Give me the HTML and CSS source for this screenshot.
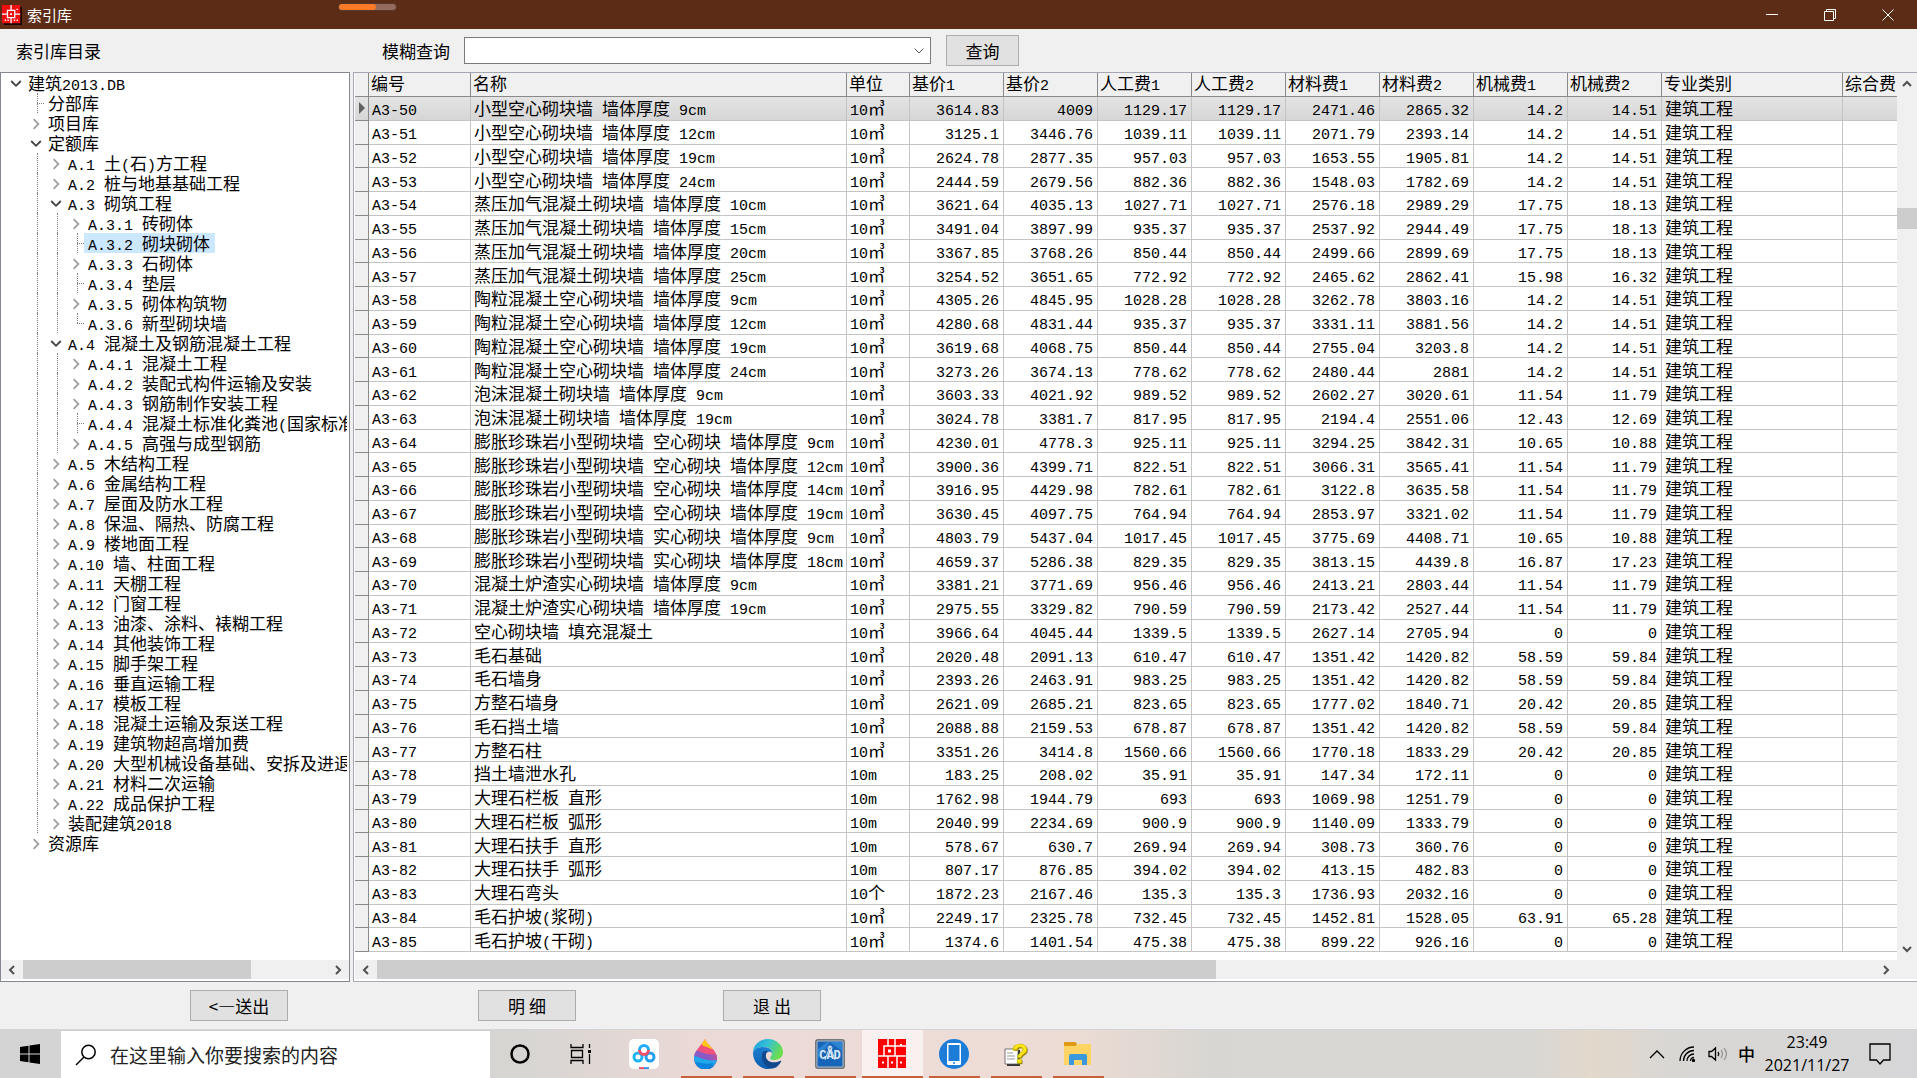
FILE: index.html
```html
<!DOCTYPE html>
<html lang="zh-CN">
<head>
<meta charset="utf-8">
<title>索引库</title>
<link rel="stylesheet" href="styles.css">
</head>
<body>
<header class="titlebar">
  <svg class="app-icon" viewBox="0 0 22 22"><path d="M2 2h20v20H2z" fill="#1a0500"/><path d="M0 0h20v20H0z" fill="#f01010"/><path d="M6 6h8v8H6zM10 0v6M10 14v6M0 10h6M14 10h6" fill="none" stroke="#fff" stroke-width="1.4"/><path d="M9 9h2v2H9zM3 16h1.500v1.500H3zM6 16h1.500v1.500H6zM13 16h1.500v1.500H13zM16 16h1.500v1.500H16zM16 4h1.500v1.500H16z" fill="#fff"/></svg>
  <h1 class="title">索引库</h1>
  <div class="pill"><span class="pill-fill"></span></div>
  <div class="window-buttons">
    <button class="win-btn" aria-label="最小化"><svg viewBox="0 0 12 12"><path d="M0 5.500h12"/></svg></button>
    <button class="win-btn" aria-label="还原"><svg viewBox="0 0 12 12"><path d="M.5 2.500h9v9h-9zM2.500 2.500v-2h9v9h-2"/></svg></button>
    <button class="win-btn" aria-label="关闭"><svg viewBox="0 0 12 12"><path d="M.5.5l11 11M11.500.5l-11 11"/></svg></button>
  </div>
</header>

<section class="toolbar">
  <span class="toolbar-title">索引库目录</span>
  <div class="query">
    <label for="query">模糊查询</label>
    <div class="combo">
      <input id="query" type="text">
      <button class="combo-arrow" aria-label="展开"><svg viewBox="0 0 10 6"><path d="M.5.5L5 5 9.500.5"/></svg></button>
    </div>
    <button class="btn btn-query">查询</button>
  </div>
</section>

<main class="panes">
  <section class="pane tree-pane">
    <ul class="tree" id="tree"></ul>
    <div class="hscroll">
      <span class="arrow"><svg viewBox="0 0 8 10"><path d="M6 1L2 5l4 4"/></svg></span>
      <div class="track"><span class="thumb tree-thumb"></span></div>
      <span class="arrow"><svg viewBox="0 0 8 10"><path d="M2 1l4 4-4 4"/></svg></span>
    </div>
  </section>
  <section class="pane grid-pane">
    <div class="grid-area">
      <div class="grid-box">
        <table class="grid">
          <colgroup><col class="c-mark"><col class="c-code"><col class="c-name"><col class="c-unit"><col class="c-num"><col class="c-num"><col class="c-num"><col class="c-num"><col class="c-num"><col class="c-num"><col class="c-num"><col class="c-num"><col class="c-kind"><col></colgroup>
          <thead><tr id="head"></tr></thead>
          <tbody id="rows"></tbody>
        </table>
      </div>
      <div class="vscroll">
        <span class="arrow"><svg viewBox="0 0 10 8"><path d="M1 6l4-4 4 4"/></svg></span>
        <div class="vtrack"><span class="vthumb"></span></div>
        <span class="arrow"><svg viewBox="0 0 10 8"><path d="M1 2l4 4 4-4"/></svg></span>
      </div>
    </div>
    <div class="hscroll grid-hscroll">
      <span class="arrow"><svg viewBox="0 0 8 10"><path d="M6 1L2 5l4 4"/></svg></span>
      <div class="track"><span class="thumb grid-thumb"></span></div>
      <span class="arrow"><svg viewBox="0 0 8 10"><path d="M2 1l4 4-4 4"/></svg></span>
    </div>
  </section>
</main>

<section class="actions">
  <button class="btn btn-send">&lt;—送出</button>
  <button class="btn btn-detail">明 细</button>
  <button class="btn btn-exit">退 出</button>
</section>

<footer class="taskbar">
  <button class="start" aria-label="开始"><svg viewBox="0 0 20 20"><path d="M0 3l8.500-1.200v7.700H0zM9.500 1.600L20 0v9.500H9.500zM0 10.500h8.500v7.700L0 17zM9.500 10.500H20V20L9.500 18.400z"/></svg></button>
  <label class="search">
    <svg viewBox="0 0 22 22"><circle cx="13.500" cy="8" r="6.700"/><path d="M9 13l-8 8"/></svg>
    <input type="text" placeholder="在这里输入你要搜索的内容" aria-label="搜索">
  </label>
  <nav class="apps">
    <button class="app" aria-label="Cortana"><svg viewBox="0 0 30 30"><circle cx="15" cy="15" r="8.500" fill="none" stroke="#000" stroke-width="2.500"/></svg></button>
    <button class="app" aria-label="任务视图"><svg viewBox="0 0 30 30"><path d="M4 5v3.500h12V5M4 25v-3.500h12V25M4.500 11.500h11v7h-11zM22.500 5v4M22.500 15v10" fill="none" stroke="#000" stroke-width="1.300"/><path d="M21 11h3v3h-3z"/></svg></button>
    <button class="app" aria-label="网盘"><svg viewBox="0 0 30 30"><rect width="30" height="30" rx="5" fill="#fff"/><g fill="none" stroke-width="3"><circle cx="9" cy="18" r="4" stroke="#20b4f4"/><circle cx="21" cy="18" r="4" stroke="#20a0f0"/><path d="M10.500 11a4.500 4.500 0 0 1 9 0" stroke="#22aef5"/><path d="M10.500 11a4.500 4.500 0 0 0 9 0" stroke="#f25068"/></g><path d="M10 28.200h5V30h-5z" fill="#f04860"/><path d="M15 28.200h5V30h-5z" fill="#2b8cf0"/></svg></button>
    <button class="app open" aria-label="画图 3D"><svg viewBox="0 0 30 30"><defs><clipPath id="drop"><path d="M14 0c1 5 12 11 12 19a11 11 0 0 1-23 0C3 12 10 7 14 0z"/></clipPath><linearGradient id="dg" x1="0" y1="0" x2="1" y2="0"><stop offset="0" stop-color="#8a5cc8"/><stop offset=".6" stop-color="#8a58c4"/><stop offset="1" stop-color="#d84c90"/></linearGradient></defs><g clip-path="url(#drop)"><path d="M0 0h30v30H0z" fill="#f0507c"/><path d="M8 0h14v10c-4 0-6-3-10-3z" fill="#ffc810"/><path d="M0 11c10-1 14 8 30 3v16H0z" fill="url(#dg)"/><path d="M0 17c8-1 12 6 26 4v9H0z" fill="#20a8ec"/><path d="M2 23c8 0 12 3 20 1v6H4z" fill="#0b84dc"/></g></svg></button>
    <button class="app open" aria-label="Edge"><svg viewBox="0 0 30 30"><defs><linearGradient id="eg" x1="0" y1="0" x2="1" y2=".4"><stop offset="0" stop-color="#1a98dc"/><stop offset=".5" stop-color="#35c1d4"/><stop offset="1" stop-color="#6add50"/></linearGradient><linearGradient id="eb" x1="0" y1="0" x2="0" y2="1"><stop offset="0" stop-color="#1a7ed0"/><stop offset="1" stop-color="#0d5cae"/></linearGradient></defs><path d="M0 14C0 6 7 0 15 0s15 6 15 13c0 6-5 8-9 8-3 0-4-1-4-2s2-2 2-5c0-4-4-6-8-6-6 0-10 3-11 6z" fill="url(#eg)"/><path d="M0 14c1-4 6-6 10-6 6 0 9 3 9 6-1-1-2-1.500-4-1-4 1-5 7-2 11 3 5 8 5 13 3-3 2-7 3-11 3C7 30 0 23 0 14z" fill="url(#eb)"/><path d="M10 13c-3 5 0 16 9 16 4 0 7-3 9-6 .5-1 0-1.500-1-1-6 3-15 1-14-6 0-2 1-3 2-3.500-2-1-4-.5-5 .5z" fill="#12488c"/></svg></button>
    <button class="app open" aria-label="CAD"><svg viewBox="0 0 30 30"><rect width="30" height="30" rx="3" fill="#74777c"/><rect x="1.500" y="1.500" width="27" height="27" rx="2" fill="#a9bccb"/><rect x="2.500" y="2.500" width="25" height="25" rx="1" fill="#1765b8"/><path d="M3 10L12 3h15v9L15 3 3 20z" fill="#2e82d2"/><path d="M15 7l-5 14M15 7l5 14" stroke="#c8d8e8" stroke-width="1"/><circle cx="15" cy="9" r="2" fill="none" stroke="#dce8f4"/><text x="15" y="20" class="cad-text">CAD</text></svg></button>
    <button class="app open current" aria-label="索引库"><svg viewBox="0 0 30 30"><path d="M1 0h28v29H1z" fill="#f00"/><path d="M7 7h11v10H7zM11 0v7M18 7h11M1 17h10M11 17v12M18 17h11M18 0v7M20 17v12" fill="none" stroke="#fff" stroke-width="1.500"/><path d="M11 10.500h3v3h-3zM5 22.500h2v2H5zM14 22.500h2v2h-2zM23 22.500h2v2h-2zM23 5h2v2h-2z" fill="#fff"/></svg></button>
    <button class="app open" aria-label="手机"><svg viewBox="0 0 30 30"><circle cx="15" cy="15" r="15" fill="#1c7cd8"/><rect x="8" y="4" width="14" height="22" rx="1.500" fill="#fff"/><path d="M9.500 6h11v16h-11z" fill="#1c7cd8"/><circle cx="15" cy="24" r="1" fill="#1c7cd8"/></svg></button>
    <button class="app open" aria-label="帮助"><svg viewBox="0 0 30 30"><path d="M6 11h13v16H6z" fill="#333"/><path d="M4 10h13v15H4z" fill="#fff" stroke="#555" stroke-width=".8"/><path d="M6 14h6M6 17h8M6 20h8" stroke="#999"/><text x="20" y="25" class="help-shadow">?</text><text x="19" y="24" class="help-text">?</text></svg></button>
    <button class="app open" aria-label="文件资源管理器"><svg viewBox="0 0 30 30"><path d="M1 4q0-1 1-1h10q1 0 2 2l-1 2H1z" fill="#dd9a12"/><path d="M1 7h12l2-2h13v20q0 1-1 1H2q-1 0-1-1z" fill="#ffd364"/><path d="M6 26V17q0-2 2-2h14q2 0 2 2v9h-5v-5h-8v5z" fill="#3a98dc"/></svg></button>
  </nav>
  <div class="tray">
    <svg class="up" viewBox="0 0 16 10"><path d="M1 9l7-7 7 7"/></svg>
    <svg class="wifi" viewBox="0 0 17 16"><path d="M1 15A14 14 0 0 1 15 1M4.500 15A10.500 10.500 0 0 1 15 4.500M8 15a7 7 0 0 1 7-7M11.500 15a3.500 3.500 0 0 1 3.500-3.500"/><circle cx="14.500" cy="14.500" r="1" fill="#000"/></svg>
    <svg class="volume" viewBox="0 0 20 16"><path d="M1 5.500h2.500L7.500 2v12l-4-3.500H1zM10 6q1.500 2 0 4"/><path class="faint" d="M13 4q3 4 0 8M16 2q5 6 0 12"/></svg>
    <span class="ime">中</span>
    <time class="clock" datetime="2021-11-27T23:49"><span>23:49</span><span>2021/11/27</span></time>
    <svg class="note" viewBox="0 0 22 22"><path d="M1 1h20v16h-6.500L11 21l-3.500-4H1z"/></svg>
  </div>
</footer>
<script src="app.js"></script>
</body>
</html>
```
FILE: styles.css
```css
* { box-sizing: border-box; }
html, body { height: 100%; margin: 0; }
body {
  display: flex;
  flex-direction: column;
  min-height: 0;
  overflow: hidden;
  background: #f0f0f0;
  color: #000;
  font: 17px/20px "Noto Sans CJK SC", sans-serif;
}
button, input { font: inherit; color: inherit; }
button { padding: 0; border: 0; background: none; }
.lat { font-family: "Liberation Mono", monospace; font-size: 15px; line-height: 0; white-space: pre; }

/* Title bar */
.titlebar {
  position: relative;
  display: flex;
  align-items: center;
  flex: none;
  height: 29px;
  padding-left: 2px;
  background: #5c2c17;
  color: #fff;
}
.app-icon { width: 20px; height: 20px; }
.title { margin: 0 0 0 5px; font-size: 15px; font-weight: 400; }
.pill {
  position: absolute;
  left: 338px;
  top: 3px;
  width: 59px;
  height: 8px;
  border: 1px solid #54382c;
  border-radius: 4px;
  background: #946b5c;
}
.pill-fill { display: block; width: 37px; height: 6px; border-radius: 3px; background: #fa7a28; }
.window-buttons { display: flex; margin-left: auto; }
.win-btn { display: grid; place-items: center; width: 58px; height: 29px; }
.win-btn svg { width: 12px; height: 12px; fill: none; stroke: #fff; }

/* Query bar */
.toolbar { display: flex; flex: none; align-items: center; height: 43px; padding: 0 16px; }
.toolbar-title { width: 366px; }
.query { display: flex; align-items: center; }
.query label { width: 82px; }
.combo { display: flex; width: 467px; height: 27px; border: 1px solid #7a7a7a; background: #fff; }
.combo input { flex: 1; min-width: 0; border: 0; outline: 0; padding: 0 4px; background: none; }
.combo-arrow { display: grid; place-items: center; width: 22px; }
.combo-arrow svg { width: 10px; height: 6px; fill: none; stroke: #555; }
.btn { height: 31px; border: 1px solid #adadad; background: #e1e1e1; line-height: 20px; }
.btn-query { width: 73px; margin-left: 15px; }

/* Panes */
.panes { display: flex; flex: 1; min-height: 0; gap: 3px; }
.pane { display: flex; flex-direction: column; min-width: 0; border: 1px solid #828790; background: #fff; }
.tree-pane { flex: none; width: 350px; }
.grid-pane { flex: 1; border-color: #a5a8b2; border-right: 0; padding-left: 1px; }

/* Tree */
.tree { flex: 1; min-height: 0; margin: 0 2px 0 3px; padding: 0; list-style: none; overflow: hidden; }
.tree li { display: flex; height: 20px; line-height: 20px; white-space: nowrap; }
.cell { position: relative; flex: none; width: 20px; height: 20px; }
.cell svg { display: block; width: 12px; height: 12px; margin: 5px 0 0 6px; fill: none; stroke: #a0a0a0; stroke-width: 1.500; }
.cell.opened svg { stroke: #404040; }
.cell.line::before { content: ""; position: absolute; left: 13px; top: 0; height: 100%; border-left: 1px dotted #808080; }
.cell.end::before { height: 10px; }
.cell.leaf::after { content: ""; position: absolute; left: 13px; top: 10px; width: 7px; border-top: 1px dotted #808080; }
.label { padding: 0 5px 0 4px; }
.label.selected { background: #cce8ff; }

/* Scroll bars */
.hscroll { display: flex; flex: none; height: 21px; background: #f0f0f0; border-bottom: 2px solid #fff; }
.arrow { display: grid; place-items: center; flex: none; width: 22px; height: 19px; }
.arrow svg { width: 10px; height: 10px; fill: none; stroke: #505050; stroke-width: 2; }
.track { flex: 1; display: flex; }
.thumb, .vthumb { background: #cdcdcd; }
.tree-thumb { width: 75%; }
.grid-hscroll .arrow:last-child { width: 42px; padding-right: 20px; }
.grid-thumb { width: 56%; }
.grid-area { display: flex; flex: 1; min-height: 0; }
.grid-box { flex: 1; min-width: 0; padding-bottom: 8px; }
.vscroll { display: flex; flex-direction: column; flex: none; width: 20px; background: #f0f0f0; }
.vscroll .arrow { width: 20px; height: 22px; }
.vtrack { display: flex; flex-direction: column; flex: 1; padding-top: 113px; }
.vthumb { height: 21px; }

/* Data grid */
.grid { width: 100%; height: 100%; border-collapse: separate; border-spacing: 0; table-layout: fixed; }
.c-mark { width: 14px; }
.c-code { width: 102px; }
.c-name { width: 376px; }
.c-unit { width: 63px; }
.c-num { width: 94px; }
.c-kind { width: 181px; }
.grid th, .grid td { padding: 0 4px 0 3px; text-align: left; font-weight: 400; white-space: nowrap; overflow: hidden; line-height: 20px; }
.grid th { height: 24px; padding: 0 0 3px 2px; border-right: 1px solid #8a8a8a; border-bottom: 1px solid #8a8a8a; background: #f0f0f0; }
.grid td { border-right: 1px solid #c4c4c4; border-bottom: 1px solid #c4c4c4; }
.grid td.name { padding-right: 0; }
.grid td.num { text-align: right; }
.grid td.mark { padding: 0; background: #f0f0f0; border-color: #8a8a8a; }
.grid th:last-child, .grid td:last-child { border-right: 0; }
.grid .active td { background: linear-gradient(#e4e4e4, #d6d6d6); }
.mark svg { display: block; width: 6px; height: 12px; margin-left: 4px; fill: #606060; }

/* Bottom buttons */
.actions { display: flex; flex: none; height: 48px; padding: 8px 190px; border-bottom: 1px solid #d4d4d8; }
.actions .btn { width: 98px; }
.btn-detail { margin-left: 190px; }
.btn-exit { margin-left: 147px; }

/* Task bar */
.taskbar {
  display: flex;
  flex: none;
  height: 48px;
  background: linear-gradient(90deg, #d4d4d4 0, #d6d5d2 27%, #ead9d5 36%, #eedcd7 52%, #ecdcd4 56%, #d8d6d2 63%, #d9d7d3 80%, #e2d8cb 83%, #d9d7d4 87%, #d6d6d8 100%);
}
.start { display: grid; place-items: center; width: 61px; padding-right: 1px; }
.start svg { width: 20px; height: 20px; }
.search { display: flex; align-items: center; width: 429px; padding-left: 14px; background: #fff; border-top: 1px solid #d0d0d0; }
.search svg { width: 22px; height: 22px; fill: none; stroke: #000; stroke-width: 1.500; }
.search input { flex: 1; min-width: 0; margin-left: 13px; padding: 0; border: 0; outline: 0; background: none; font-size: 19px; line-height: 28px; }
.search input::placeholder { color: #222; opacity: 1; }
.apps { display: flex; gap: 1px; }
.app { position: relative; display: grid; place-items: center; width: 61px; padding-right: 1px; }
.app svg { width: 30px; height: 30px; }
.app.open::after { content: ""; position: absolute; left: 5px; right: 5px; bottom: 0; height: 2px; background: #c8603c; }
.app.current { background: #f9f1ef; }
.app.current::after { left: 0; right: 0; }
.cad-text { font: bold 12px "Liberation Mono", monospace; fill: #dce8f4; text-anchor: middle; }
.help-text, .help-shadow { font: bold 27px "Liberation Sans", sans-serif; text-anchor: middle; fill: #fce61a; stroke: #c8b400; stroke-width: .5; }
.help-shadow { fill: #776a00; }
.tray { display: flex; align-items: center; margin-left: auto; padding-right: 26px; }
.tray svg { fill: none; stroke: #000; stroke-width: 1.300; }
.up { width: 16px; height: 10px; }
.wifi { width: 17px; height: 16px; margin-left: 14px; }
.volume { width: 20px; height: 16px; margin-left: 12px; }
.volume .faint { stroke: #999; }
.ime { margin-left: 10px; font-weight: 500; }
.clock { display: flex; flex-direction: column; align-items: center; width: 86px; margin: 0 19px 0 9px; font: 16px/23px "Open Sans", sans-serif; }
.note { width: 22px; height: 22px; }
```
FILE: app.js
```js
// Wraps runs of Latin characters so they use the fixed-width face.
const mixed = s => s.replace(/[\x20-\x7e]+/g, m => `<span class="lat">${m}</span>`);

// Tree nodes: [level, state, text]; state is o (open), c (closed), l (leaf), e (last leaf).
const nodes = [
  [0, 'o', '建筑2013.DB'], [1, 'l', '分部库'], [1, 'c', '项目库'], [1, 'o', '定额库'],
  [2, 'c', 'A.1 土(石)方工程'], [2, 'c', 'A.2 桩与地基基础工程'], [2, 'o', 'A.3 砌筑工程'],
  [3, 'c', 'A.3.1 砖砌体'], [3, 'l', 'A.3.2 砌块砌体', true], [3, 'c', 'A.3.3 石砌体'],
  [3, 'l', 'A.3.4 垫层'], [3, 'c', 'A.3.5 砌体构筑物'], [3, 'e', 'A.3.6 新型砌块墙'],
  [2, 'o', 'A.4 混凝土及钢筋混凝土工程'],
  [3, 'c', 'A.4.1 混凝土工程'], [3, 'c', 'A.4.2 装配式构件运输及安装'], [3, 'c', 'A.4.3 钢筋制作安装工程'],
  [3, 'l', 'A.4.4 混凝土标准化粪池(国家标准)'], [3, 'c', 'A.4.5 高强与成型钢筋'],
  [2, 'c', 'A.5 木结构工程'], [2, 'c', 'A.6 金属结构工程'], [2, 'c', 'A.7 屋面及防水工程'],
  [2, 'c', 'A.8 保温、隔热、防腐工程'], [2, 'c', 'A.9 楼地面工程'], [2, 'c', 'A.10 墙、柱面工程'],
  [2, 'c', 'A.11 天棚工程'], [2, 'c', 'A.12 门窗工程'], [2, 'c', 'A.13 油漆、涂料、裱糊工程'],
  [2, 'c', 'A.14 其他装饰工程'], [2, 'c', 'A.15 脚手架工程'], [2, 'c', 'A.16 垂直运输工程'],
  [2, 'c', 'A.17 模板工程'], [2, 'c', 'A.18 混凝土运输及泵送工程'], [2, 'c', 'A.19 建筑物超高增加费'],
  [2, 'c', 'A.20 大型机械设备基础、安拆及进退场'], [2, 'c', 'A.21 材料二次运输'], [2, 'c', 'A.22 成品保护工程'],
  [2, 'c', '装配建筑2018'], [1, 'c', '资源库']
];
const cells = {
  o: '<span class="cell opened"><svg viewBox="0 0 10 10"><path d="M1 2.500l4 4 4-4"/></svg></span>',
  c: '<span class="cell"><svg viewBox="0 0 10 10"><path d="M3 1l4 4-4 4"/></svg></span>',
  l: '<span class="cell line leaf"></span>',
  e: '<span class="cell line leaf end"></span>'
};
document.getElementById('tree').innerHTML = nodes.map(([level, state, text, sel]) => {
  let guides = '';
  for (let i = 0; i < level; i++) guides += `<span class="cell${i ? ' line' : ''}"></span>`;
  return `<li>${guides}${cells[state]}<span class="label${sel ? ' selected' : ''}">${mixed(text)}</span></li>`;
}).join('');

const heads = ['', '编号', '名称', '单位', '基价1', '基价2', '人工费1', '人工费2', '材料费1', '材料费2', '机械费1', '机械费2', '专业类别', '综合费'];
document.getElementById('head').innerHTML = heads.map(h => `<th scope="col">${mixed(h)}</th>`).join('');

// name | unit | base 1 | base 2 | labour | material 1 | material 2 | machine 1 | machine 2
const data = `小型空心砌块墙 墙体厚度 9cm|10㎥|3614.83|4009|1129.17|2471.46|2865.32|14.2|14.51
小型空心砌块墙 墙体厚度 12cm|10㎥|3125.1|3446.76|1039.11|2071.79|2393.14|14.2|14.51
小型空心砌块墙 墙体厚度 19cm|10㎥|2624.78|2877.35|957.03|1653.55|1905.81|14.2|14.51
小型空心砌块墙 墙体厚度 24cm|10㎥|2444.59|2679.56|882.36|1548.03|1782.69|14.2|14.51
蒸压加气混凝土砌块墙 墙体厚度 10cm|10㎥|3621.64|4035.13|1027.71|2576.18|2989.29|17.75|18.13
蒸压加气混凝土砌块墙 墙体厚度 15cm|10㎥|3491.04|3897.99|935.37|2537.92|2944.49|17.75|18.13
蒸压加气混凝土砌块墙 墙体厚度 20cm|10㎥|3367.85|3768.26|850.44|2499.66|2899.69|17.75|18.13
蒸压加气混凝土砌块墙 墙体厚度 25cm|10㎥|3254.52|3651.65|772.92|2465.62|2862.41|15.98|16.32
陶粒混凝土空心砌块墙 墙体厚度 9cm|10㎥|4305.26|4845.95|1028.28|3262.78|3803.16|14.2|14.51
陶粒混凝土空心砌块墙 墙体厚度 12cm|10㎥|4280.68|4831.44|935.37|3331.11|3881.56|14.2|14.51
陶粒混凝土空心砌块墙 墙体厚度 19cm|10㎥|3619.68|4068.75|850.44|2755.04|3203.8|14.2|14.51
陶粒混凝土空心砌块墙 墙体厚度 24cm|10㎥|3273.26|3674.13|778.62|2480.44|2881|14.2|14.51
泡沫混凝土砌块墙 墙体厚度 9cm|10㎥|3603.33|4021.92|989.52|2602.27|3020.61|11.54|11.79
泡沫混凝土砌块墙 墙体厚度 19cm|10㎥|3024.78|3381.7|817.95|2194.4|2551.06|12.43|12.69
膨胀珍珠岩小型砌块墙 空心砌块 墙体厚度 9cm|10㎥|4230.01|4778.3|925.11|3294.25|3842.31|10.65|10.88
膨胀珍珠岩小型砌块墙 空心砌块 墙体厚度 12cm|10㎥|3900.36|4399.71|822.51|3066.31|3565.41|11.54|11.79
膨胀珍珠岩小型砌块墙 空心砌块 墙体厚度 14cm|10㎥|3916.95|4429.98|782.61|3122.8|3635.58|11.54|11.79
膨胀珍珠岩小型砌块墙 空心砌块 墙体厚度 19cm|10㎥|3630.45|4097.75|764.94|2853.97|3321.02|11.54|11.79
膨胀珍珠岩小型砌块墙 实心砌块 墙体厚度 9cm|10㎥|4803.79|5437.04|1017.45|3775.69|4408.71|10.65|10.88
膨胀珍珠岩小型砌块墙 实心砌块 墙体厚度 18cm|10㎥|4659.37|5286.38|829.35|3813.15|4439.8|16.87|17.23
混凝土炉渣实心砌块墙 墙体厚度 9cm|10㎥|3381.21|3771.69|956.46|2413.21|2803.44|11.54|11.79
混凝土炉渣实心砌块墙 墙体厚度 19cm|10㎥|2975.55|3329.82|790.59|2173.42|2527.44|11.54|11.79
空心砌块墙 填充混凝土|10㎥|3966.64|4045.44|1339.5|2627.14|2705.94|0|0
毛石基础|10㎥|2020.48|2091.13|610.47|1351.42|1420.82|58.59|59.84
毛石墙身|10㎥|2393.26|2463.91|983.25|1351.42|1420.82|58.59|59.84
方整石墙身|10㎥|2621.09|2685.21|823.65|1777.02|1840.71|20.42|20.85
毛石挡土墙|10㎥|2088.88|2159.53|678.87|1351.42|1420.82|58.59|59.84
方整石柱|10㎥|3351.26|3414.8|1560.66|1770.18|1833.29|20.42|20.85
挡土墙泄水孔|10m|183.25|208.02|35.91|147.34|172.11|0|0
大理石栏板 直形|10m|1762.98|1944.79|693|1069.98|1251.79|0|0
大理石栏板 弧形|10m|2040.99|2234.69|900.9|1140.09|1333.79|0|0
大理石扶手 直形|10m|578.67|630.7|269.94|308.73|360.76|0|0
大理石扶手 弧形|10m|807.17|876.85|394.02|413.15|482.83|0|0
大理石弯头|10个|1872.23|2167.46|135.3|1736.93|2032.16|0|0
毛石护坡(浆砌)|10㎥|2249.17|2325.78|732.45|1452.81|1528.05|63.91|65.28
毛石护坡(干砌)|10㎥|1374.6|1401.54|475.38|899.22|926.16|0|0`;
document.getElementById('rows').innerHTML = data.split('\n').map((line, i) => {
  const [name, unit, b1, b2, labour, ...rest] = line.split('|');
  const nums = [b1, b2, labour, labour, ...rest].map(n => `<td class="num">${mixed(n)}</td>`).join('');
  const mark = i ? '' : '<svg viewBox="0 0 6 12"><path d="M0 0l6 6-6 6z"/></svg>';
  return `<tr${i ? '' : ' class="active"'}><td class="mark">${mark}</td><td>${mixed('A3-' + (50 + i))}</td><td class="name">${mixed(name)}</td><td>${mixed(unit)}</td>${nums}<td>建筑工程</td><td></td></tr>`;
}).join('');
```
